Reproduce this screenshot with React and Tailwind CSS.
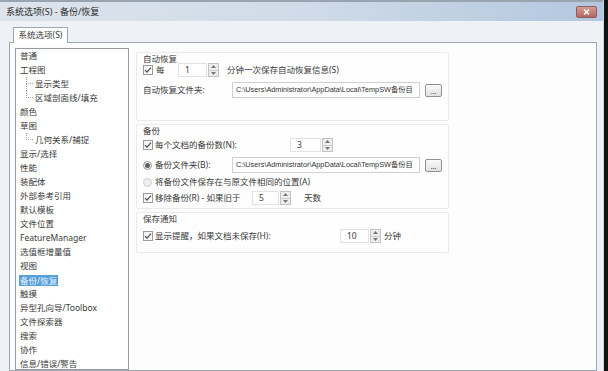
import React from "react";

const FONT = { fontFamily: '"Noto Sans", "Noto Sans CJK SC", sans-serif' };

const treeItems = [
  { label: "普通" },
  { label: "工程图" },
  { label: "显示类型", child: true },
  { label: "区域剖面线/填充", child: true, last: true },
  { label: "颜色" },
  { label: "草图" },
  { label: "几何关系/捕捉", child: true, last: true },
  { label: "显示/选择" },
  { label: "性能" },
  { label: "装配体" },
  { label: "外部参考引用" },
  { label: "默认模板" },
  { label: "文件位置" },
  { label: "FeatureManager" },
  { label: "选值框增量值" },
  { label: "视图" },
  { label: "备份/恢复", selected: true },
  { label: "触摸" },
  { label: "异型孔向导/Toolbox" },
  { label: "文件探索器" },
  { label: "搜索" },
  { label: "协作" },
  { label: "信息/错误/警告" },
];

function TreeRow({ item }) {
  if (item.child) {
    return (
      <div className="flex h-[14px] items-center pl-[10px]">
        <div className="flex h-full w-[7px] flex-col">
          <div className="h-[7px] border-b border-l border-dotted border-[#a0a0a0]" />
          {!item.last && <div className="flex-1 border-l border-dotted border-[#a0a0a0]" />}
        </div>
        <span className="ml-[2px] whitespace-nowrap">{item.label}</span>
      </div>
    );
  }
  return (
    <div className="flex h-[14px] items-center pl-[3px]">
      <span
        className={
          item.selected
            ? "whitespace-nowrap bg-[#56a0d8] px-[1px] leading-[11px] text-[#e6f2ff]"
            : "whitespace-nowrap px-[1px]"
        }
      >
        {item.label}
      </span>
    </div>
  );
}

function CheckBox() {
  return (
    <div className="flex h-[10px] w-[10px] shrink-0 items-center justify-center border border-[#9a9b9b] bg-gradient-to-br from-[#f0f0f0] to-[#ffffff]">
      <svg width="8" height="8" viewBox="0 0 8 8">
        <path d="M1 4.2 L3 6.2 L7 1.6" fill="none" stroke="#4a4a4a" strokeWidth="1.2" />
      </svg>
    </div>
  );
}

function Radio({ on }) {
  return (
    <div
      className={
        on
          ? "flex h-[9px] w-[9px] shrink-0 items-center justify-center rounded-full border border-[#999] bg-[#f4f4f4]"
          : "flex h-[9px] w-[9px] shrink-0 items-center justify-center rounded-full border border-[#cfcfcf] bg-[#eeeeee]"
      }
    >
      {on && <div className="h-[5px] w-[5px] rounded-full bg-[#606060]" />}
    </div>
  );
}

function Spinner({ value, width }) {
  return (
    <div className="flex h-[14px] items-stretch">
      <div
        className="flex items-center border border-[#e0e3e6] bg-white pl-[6px]"
        style={{ width }}
      >
        {value}
      </div>
      <div className="ml-[1px] flex w-[11px] flex-col border border-[#c0c4c8] bg-[#ededed]">
        <div className="flex flex-1 items-center justify-center border-b border-[#cdcdcd]">
          <svg width="5" height="3" viewBox="0 0 5 3">
            <path d="M0 3 L2.5 0 L5 3 Z" fill="#777" />
          </svg>
        </div>
        <div className="flex flex-1 items-center justify-center">
          <svg width="5" height="3" viewBox="0 0 5 3">
            <path d="M0 0 L2.5 3 L5 0 Z" fill="#777" />
          </svg>
        </div>
      </div>
    </div>
  );
}

function PathField() {
  return (
    <div className="flex items-center">
      <div
        className="flex h-[16px] w-[188px] items-center overflow-hidden whitespace-nowrap border border-[#cdd1d6] bg-white pl-[3px] text-[7.3px] text-[#333]"
        style={{ fontFamily: '"Liberation Sans", "Noto Sans CJK SC", sans-serif' }}
      >
        {"C:\\Users\\Administrator\\AppData\\Local\\TempSW备份目"}
      </div>
      <div className="ml-[5px] flex h-[13px] w-[17px] items-end justify-center rounded-[2px] border border-[#8f9295] bg-gradient-to-b from-[#fbfbfb] to-[#e0e0e0] pb-[1px] text-[7px] leading-[7px] text-[#444]">
        ...
      </div>
    </div>
  );
}

function GroupBox({ title, className, children }) {
  return (
    <div
      className={
        "w-[313px] rounded-[2px] border border-[#e8eaed] bg-[#fefefe] pl-[6px] shadow-[0_0_1px_rgba(0,0,0,0.05)] " +
        className
      }
    >
      <div className="h-[12px] leading-[12px]">{title}</div>
      {children}
    </div>
  );
}

export default function App() {
  return (
    <div
      className="flex h-[371px] w-[608px] overflow-hidden bg-[#eef1f5] text-[8.5px] text-[#3a3a3a]"
      style={FONT}
    >
      <div className="flex min-w-0 flex-1 flex-col">
        {/* title bar */}
        <div className="flex h-[21px] shrink-0 items-center border-t-[2px] border-[#98a4b0] bg-gradient-to-r from-[#dde4ec] via-[#cfdbe8] to-[#b3c7de] pl-[6px]">
          <span className="flex-1 text-[9px] text-[#2a2a2a]">系统选项(S) - 备份/恢复</span>
          <div className="mr-[6px] flex h-[12px] w-[21px] items-center justify-center rounded-[2px] border border-[#8f605b] bg-gradient-to-b from-[#d69c96] to-[#b4665f]">
            <svg width="7" height="6" viewBox="0 0 7 6">
              <path d="M1 0.5 L6 5.5 M6 0.5 L1 5.5" stroke="#ffffff" strokeWidth="1.4" />
            </svg>
          </div>
        </div>

        {/* tab */}
        <div className="mt-[6px] flex shrink-0 pl-[13px]">
          <div className="relative z-10 -mb-[1px] flex h-[16px] w-[55px] items-center justify-center border border-b-0 border-[#9ea8b2] bg-white">
            系统选项(S)
          </div>
        </div>

        {/* tab panel */}
        <div className="ml-[9px] mr-[6px] flex min-h-0 flex-1 border border-[#9ea8b2] bg-[#fdfdfe]">
          {/* tree */}
          <div className="ml-[5px] mt-[5px] w-[114px] shrink-0 border border-[#979ca2] bg-white">
            {treeItems.map((item) => (
              <TreeRow key={item.label} item={item} />
            ))}
          </div>

          {/* options */}
          <div className="ml-[7px] mt-[9px] flex flex-col gap-[3px]">
            <GroupBox title="自动恢复" className="h-[69px]">
              <div className="mt-[-2px] flex h-[14px] items-center">
                <CheckBox />
                <span className="ml-[3px] w-[22px]">每</span>
                <Spinner value="1" width={29} />
                <span className="ml-[8px]">分钟一次保存自动恢复信息(S)</span>
              </div>
              <div className="mt-[5px] flex h-[16px] items-center">
                <span className="w-[89px]">自动恢复文件夹:</span>
                <PathField />
              </div>
            </GroupBox>

            <GroupBox title="备份" className="h-[85px]">
              <div className="mt-[1px] flex h-[14px] items-center">
                <CheckBox />
                <span className="ml-[2px] w-[135px]">每个文档的备份数(N):</span>
                <Spinner value="3" width={31} />
              </div>
              <div className="mt-[5px] flex h-[16px] items-center">
                <Radio on />
                <span className="ml-[3px] w-[77px]">备份文件夹(B):</span>
                <PathField />
              </div>
              <div className="mt-[2px] flex h-[14px] items-center">
                <Radio />
                <span className="ml-[3px]">将备份文件保存在与原文件相同的位置(A)</span>
              </div>
              <div className="mt-[2px] flex h-[14px] items-center">
                <CheckBox />
                <span className="ml-[2px] w-[97px]">移除备份(R) - 如果旧于</span>
                <Spinner value="5" width={27} />
                <span className="ml-[13px]">天数</span>
              </div>
            </GroupBox>

            <GroupBox title="保存通知" className="h-[41px]">
              <div className="mt-[4px] flex h-[14px] items-center">
                <CheckBox />
                <span className="ml-[2px] w-[185px]">显示提醒，如果文档未保存(H):</span>
                <Spinner value="10" width={29} />
                <span className="ml-[3px]">分钟</span>
              </div>
            </GroupBox>
          </div>
        </div>
      </div>
      <div className="w-[5px] shrink-0 border-l border-[#c8d4de] bg-[#111]" />
    </div>
  );
}
